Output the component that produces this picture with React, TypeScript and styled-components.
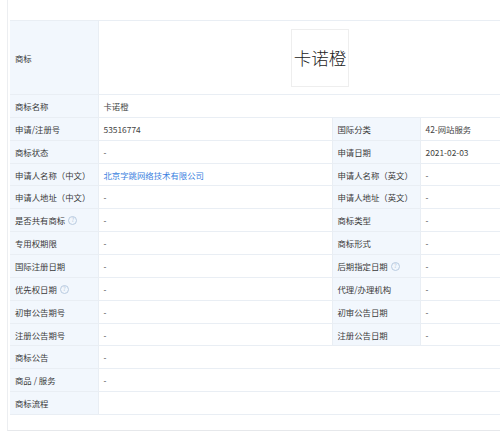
import React from "react";
import styled, { createGlobalStyle } from "styled-components";

const Global = createGlobalStyle`
  html, body { margin: 0; padding: 0; background: #ffffff; overflow: hidden; }
  body { font-family: "Noto Sans CJK SC", "Noto Sans", sans-serif; }
`;

const Page = styled.div`
  width: 500px;
  height: 434px;
  overflow: hidden;
  background: #ffffff;
`;

const Card = styled.div`
  margin-left: 7px;
  width: 560px;
  height: 431px;
  border-left: 1px solid #eceef1;
  border-bottom: 1px solid #e6e8eb;
  padding: 20px 0 0 2px;
  box-sizing: border-box;
`;

const Table = styled.table`
  width: 532px;
  table-layout: fixed;
  border-collapse: collapse;
  font-size: 8.4px;
  color: #333;
`;

const Row = styled.tr<{ $h?: number }>`
  height: ${(p) => p.$h ?? 22.86}px;
`;

const Label = styled.th`
  background: #f2f7fd;
  border: 1px solid #e9eef4;
  border-left: none;
  font-weight: 400;
  text-align: left;
  padding: 0 0 0 5px;
  white-space: nowrap;
  color: #3a3a3a;
`;

const Value = styled.td<{ $link?: boolean }>`
  border: 1px solid #e9eef4;
  padding: 0 0 0 5px;
  white-space: nowrap;
  color: ${(p) => (p.$link ? "#3a7fe0" : "#444")};
`;

const LogoCell = styled.td`
  border: 1px solid #e9eef4;
  text-align: center;
  padding: 0;
`;

const LogoBox = styled.div`
  width: 58px;
  height: 58px;
  margin: 0 auto;
  border: 1px solid #eeeeee;
  box-sizing: border-box;
  display: flex;
  align-items: center;
  justify-content: center;
  font-family: "Noto Sans CJK SC", serif;
  font-weight: 300;
  font-size: 17.5px;
  color: #222;
  letter-spacing: 0;
`;

const Help = styled.span`
  display: inline-flex;
  align-items: center;
  justify-content: center;
  width: 7px;
  height: 7px;
  margin-left: 3px;
  border: 1px solid #b9cbe0;
  border-radius: 50%;
  font-size: 5.5px;
  line-height: 1;
  color: #a9bcd3;
  vertical-align: middle;
  position: relative;
  top: -1px;
`;

const Q = () => <Help>?</Help>;

type Pair = [React.ReactNode, React.ReactNode, boolean?];

const pairs: [Pair, Pair | null][] = [
  [["申请/注册号", "53516774"], ["国际分类", "42-网站服务"]],
  [["商标状态", "-"], ["申请日期", "2021-02-03"]],
  [["申请人名称（中文）", "北京字跳网络技术有限公司", true], ["申请人名称（英文）", "-"]],
  [["申请人地址（中文）", "-"], ["申请人地址（英文）", "-"]],
  [[<>是否共有商标<Q /></>, "-"], ["商标类型", "-"]],
  [["专用权期限", "-"], ["商标形式", "-"]],
  [["国际注册日期", "-"], [<>后期指定日期<Q /></>, "-"]],
  [[<>优先权日期<Q /></>, "-"], ["代理/办理机构", "-"]],
  [["初审公告期号", "-"], ["初审公告日期", "-"]],
  [["注册公告期号", "-"], ["注册公告日期", "-"]],
  [["商标公告", "-"], null],
  [["商品 / 服务", "-"], null],
  [["商标流程", ""], null],
];

export default function App() {
  return (
    <Page>
      <Global />
      <Card>
        <Table>
          <colgroup>
            <col style={{ width: 88 }} />
            <col style={{ width: 234 }} />
            <col style={{ width: 88 }} />
            <col style={{ width: 122 }} />
          </colgroup>
          <tbody>
            <Row $h={74}>
              <Label>商标</Label>
              <LogoCell colSpan={3}>
                <LogoBox>卡诺橙</LogoBox>
              </LogoCell>
            </Row>
            <Row>
              <Label>商标名称</Label>
              <Value colSpan={3}>卡诺橙</Value>
            </Row>
            {pairs.map(([a, b], i) => (
              <Row key={i}>
                <Label>{a[0]}</Label>
                <Value colSpan={b ? 1 : 3} $link={a[2]}>
                  {a[1]}
                </Value>
                {b && (
                  <>
                    <Label>{b[0]}</Label>
                    <Value>{b[1]}</Value>
                  </>
                )}
              </Row>
            ))}
          </tbody>
        </Table>
      </Card>
    </Page>
  );
}
